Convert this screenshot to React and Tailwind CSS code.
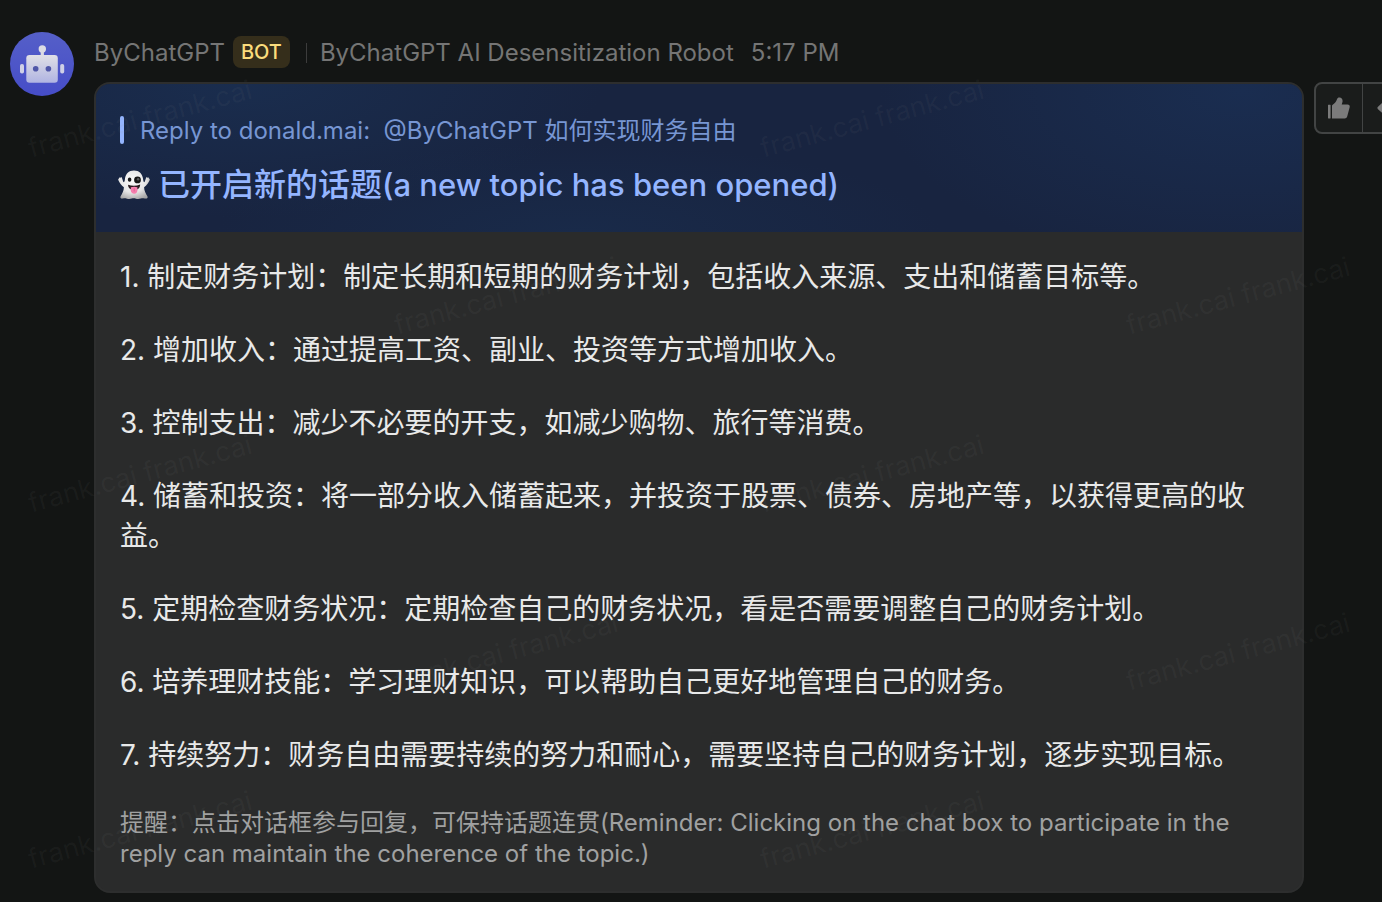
const tips = [
  "制定财务计划：制定长期和短期的财务计划，包括收入来源、支出和储蓄目标等。",
  "增加收入：通过提高工资、副业、投资等方式增加收入。",
  "控制支出：减少不必要的开支，如减少购物、旅行等消费。",
  "储蓄和投资：将一部分收入储蓄起来，并投资于股票、债券、房地产等，以获得更高的收益。",
  "定期检查财务状况：定期检查自己的财务状况，看是否需要调整自己的财务计划。",
  "培养理财技能：学习理财知识，可以帮助自己更好地管理自己的财务。",
  "持续努力：财务自由需要持续的努力和耐心，需要坚持自己的财务计划，逐步实现目标。",
];

const watermarks = [
  [29, 133], [761, 133],
  [395, 310], [1127, 310],
  [29, 488], [761, 488],
  [395, 666], [1127, 666],
  [29, 844], [761, 844],
];

function RobotAvatar() {
  return (
    <svg viewBox="0 0 64 64" className="size-16 shrink-0" role="img" aria-label="ByChatGPT">
      <defs>
        <linearGradient id="disc" x1="0" y1="0" x2="0" y2="1">
          <stop offset="0" stopColor="#555fc8" />
          <stop offset="1" stopColor="#464dc8" />
        </linearGradient>
        <linearGradient id="head" x1="0" y1="0" x2="0" y2="1">
          <stop offset="0" stopColor="#e0e0e6" />
          <stop offset="1" stopColor="#b0b4e2" />
        </linearGradient>
      </defs>
      <circle cx="32" cy="32" r="32" fill="url(#disc)" />
      <circle cx="32.3" cy="17" r="3.7" fill="#dcdce4" />
      <rect x="30.7" y="18" width="3.2" height="7" fill="#dcdce4" />
      <rect x="16.3" y="23" width="31.5" height="27.7" rx="3.2" fill="url(#head)" />
      <rect x="10" y="32" width="4" height="9.5" rx="1.8" fill="#cfd0e6" />
      <rect x="50.2" y="32" width="4" height="9.5" rx="1.8" fill="#cfd0e6" />
      <circle cx="25.7" cy="36.7" r="2.8" fill="#5057a8" />
      <circle cx="38.4" cy="36.7" r="2.8" fill="#5057a8" />
    </svg>
  );
}

function Ghost() {
  return (
    <svg viewBox="0 0 32 30" className="h-[30px] w-8 shrink-0" aria-hidden="true">
      <defs>
        <radialGradient id="ghost" cx="0.45" cy="0.35" r="0.7">
          <stop offset="0" stopColor="#fafafa" />
          <stop offset="0.6" stopColor="#e6e6e6" />
          <stop offset="1" stopColor="#a6a6a6" />
        </radialGradient>
      </defs>
      <path
        d="M16 .4C10.800.4 7.500 3.800 7 8.600C6.800 10.600 6.500 12 5.900 12.200C4.900 11.900 4.700 9.600 3.900 7.700C3.300 6.500 2.400 6.800 2.500 8.100C1.700 7 .8 7.400 1.100 8.500C.1 8.500 0 9.500.5 10.600C1.600 13 3.200 15.600 5.900 17.200C5.900 20.500 4.200 23.500 2.600 26.200C1.800 27.800 3 28.900 5 28.500C6.700 28.200 7.400 28.300 9 28.700C10.700 29.200 12.300 29.100 13.700 28.600C15.200 28.200 16.500 28.200 18 28.700C19.600 29.200 21.200 29.100 22.800 28.600C24.300 28.200 25.300 28.300 26.800 28.500C29 28.900 30.200 27.800 29.400 26.200C27.800 23.500 26.100 20.500 26.100 17.200C28.800 15.600 30.400 13 31.500 10.600C32 9.500 31.900 8.500 30.900 8.500C31.200 7.400 30.300 7 29.500 8.100C29.600 6.800 28.700 6.500 28.100 7.700C27.300 9.600 27.100 11.900 26.100 12.200C25.500 12 25.300 10.600 25 8.600C24.400 3.800 21.200.4 16 .4Z"
        fill="url(#ghost)"
      />
      <ellipse cx="11.600" cy="9.700" rx="1.800" ry="2.100" fill="#171717" />
      <circle cx="19.500" cy="9.900" r="3.400" fill="#171717" />
      <circle cx="20.100" cy="9.300" r="1.300" fill="#5a5a5a" />
      <path d="M10 14.800Q16 17 22.200 14.600Q22 18.500 19 19.400H13.100Q10.300 18.400 10 14.800Z" fill="#2a1b20" />
      <path d="M12.800 17.300Q16 16.300 19.400 17.200V20.600Q19.200 23.700 16.300 23.800Q13 23.700 12.800 20.600Z" fill="#f57fae" />
      <path d="M16.200 18V21.500" stroke="#d95c90" strokeWidth="0.800" />
    </svg>
  );
}

function ThumbUp() {
  return (
    <svg viewBox="0 0 22 22" className="size-[22px]" fill="#7b7b7b" aria-hidden="true">
      <rect x="0" y="7.700" width="2.600" height="13.800" rx="0.400" />
      <path d="M4 8.800Q4 8 4.700 7.700C7 6.500 8.300 4.500 9 2.300C9.500.8 10.600.2 12 .6C14.200 1.200 15 3.100 14.400 5.200L13.700 7.500H19.500C21.300 7.500 22.100 8.700 21.600 10.400L19.200 19.600Q18.700 21.500 16.700 21.500H4Z" />
    </svg>
  );
}

function ReplyArrow() {
  return (
    <svg viewBox="0 0 24 22" className="h-[22px] w-6" fill="#7b7b7b" aria-hidden="true">
      <path d="M1 9.800L9 2.200Q10.500 1 10.500 3V6.500C18 6.500 23 11 23 20C20 15.500 16 14.500 10.500 14.500V18.500Q10.500 20.500 9 19.300L1 12.200Q-.2 11 1 9.800Z" />
    </svg>
  );
}

export default function App() {
  return (
    <div className="relative min-h-screen overflow-hidden bg-[#131514] font-['Inter','Noto_Sans_CJK_SC',sans-serif]">
      <article className="flex items-start pt-8 pb-[9px] pl-[10px]">
        <RobotAvatar />

        <div className="ml-5 min-w-0 flex-1 pt-1">
          <header className="flex h-[34px] items-center text-2xl whitespace-nowrap text-[#757575]">
            <span>ByChatGPT</span>
            <span className="ml-2 flex h-8 items-center self-start rounded-lg bg-[#352e1b] px-2 text-xl font-medium text-[#fbdc7c]">
              BOT
            </span>
            <span className="ml-4 h-5 w-px bg-[#3c3c3c]" />
            <span className="ml-[13px]">ByChatGPT AI Desensitization Robot</span>
            <time className="ml-[17px]">5:17 PM</time>
          </header>

          <section className="mt-3 overflow-hidden rounded-2xl border-2 border-[#2d2e2e] bg-[#2a2b2b]">
            <div className="bg-[#182440] bg-[radial-gradient(ellipse_30%_90%_at_12%_0%,#1a2d4e_0%,transparent_100%),radial-gradient(ellipse_30%_120%_at_95%_5%,#1a2d50_0%,transparent_100%),radial-gradient(ellipse_30%_60%_at_40%_100%,#192a49_0%,transparent_100%)] px-6 pt-7 pb-[25px]">
              <div className="flex h-[38px] items-center text-2xl text-[#7796d3]">
                <span className="mt-1 mr-4 h-7 w-1 shrink-0 self-start rounded-sm bg-[#94b5ff]" />
                <p className="whitespace-pre">{"Reply to donald.mai:  @ByChatGPT 如何实现财务自由"}</p>
              </div>
              <h1 className="mt-[13px] -ml-0.5 flex h-11 items-center gap-2 text-[32px] font-medium whitespace-nowrap text-[#94b5ff]">
                <Ghost />
                <span>
                  已开启新的话题<span className="text-[31px]">(a new topic has been opened)</span>
                </span>
              </h1>
            </div>

            <div className="px-6 pt-[25px] pb-[22px]">
              <ol className="flex flex-col gap-[33px] text-[28px] leading-10 text-[#e8e9e9]">
                {tips.map((tip, i) => (
                  <li key={tip}>{`${i + 1}. ${tip}`}</li>
                ))}
              </ol>
              <p className="mt-8 text-2xl leading-[31px] text-[#a0a1a1]">
                提醒：点击对话框参与回复，可保持话题连贯(Reminder: Clicking on the chat box to participate in the reply can maintain the coherence of the topic.)
              </p>
            </div>
          </section>
        </div>

        <div className="mt-[50px] ml-[10px] w-[68px] shrink-0">
          <div className="flex h-[52px] w-[102px] rounded-lg border-2 border-[#424444] bg-[#1a1c1b]">
            <button type="button" aria-label="Like" className="flex w-[47px] shrink-0 items-center justify-center border-r border-[#424444]">
              <ThumbUp />
            </button>
            <button type="button" aria-label="Reply" className="flex flex-1 items-center justify-center">
              <ReplyArrow />
            </button>
          </div>
        </div>
      </article>

      <div aria-hidden="true" className="pointer-events-none absolute inset-0 overflow-hidden text-[27px] leading-8 text-[#8c8c8c]/7 select-none">
        {watermarks.map(([left, top]) => (
          <span
            key={`${left}-${top}`}
            className="absolute origin-left -rotate-15 whitespace-nowrap"
            style={{ left, top }}
          >
            frank.cai frank.cai
          </span>
        ))}
      </div>
    </div>
  );
}
